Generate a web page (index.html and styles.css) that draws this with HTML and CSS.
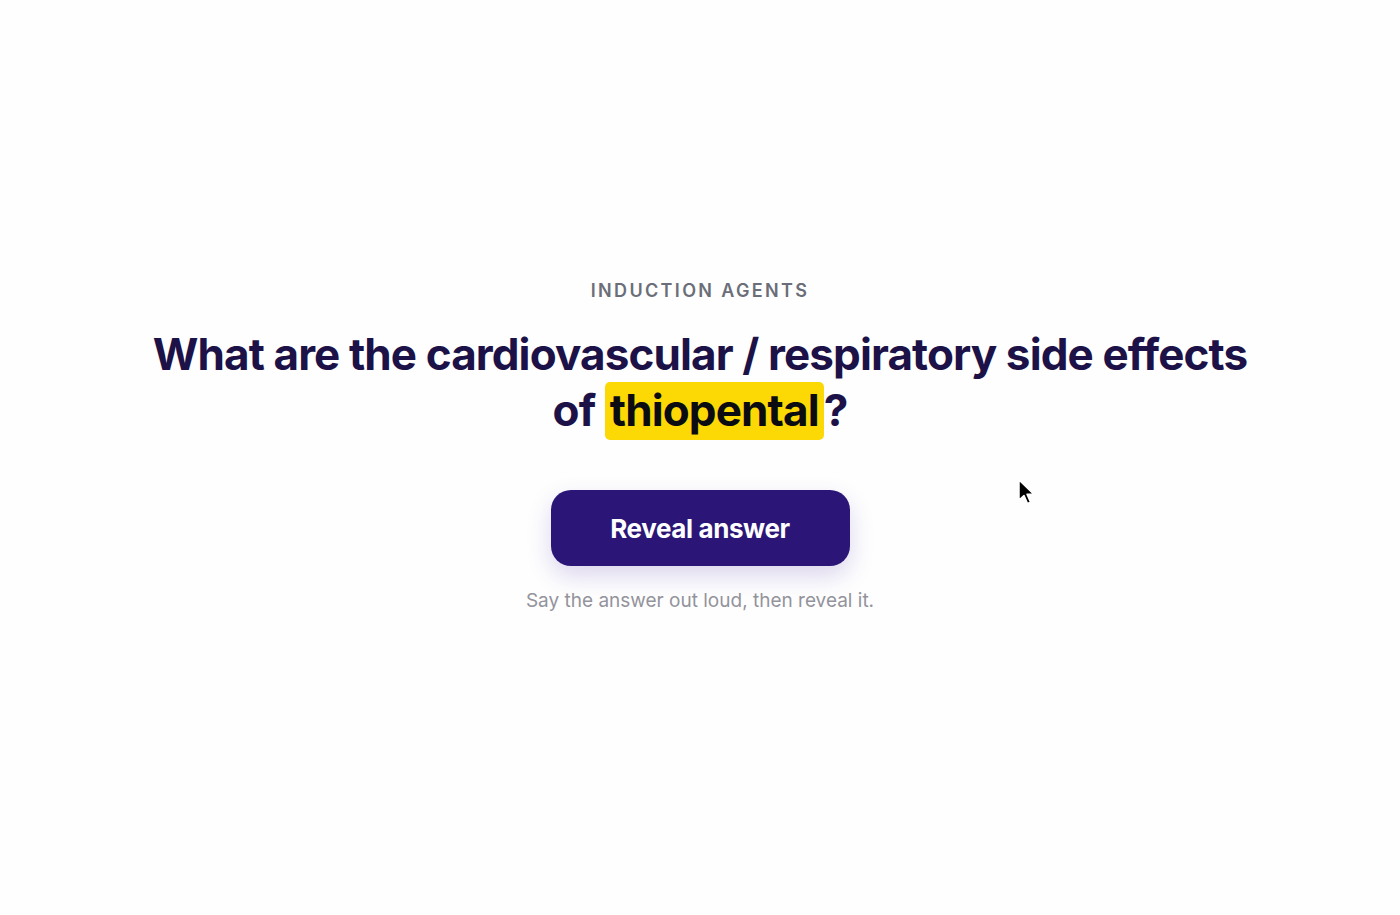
FILE: index.html
```html
<!DOCTYPE html>
<html>
<head>
<meta charset="utf-8">
<link rel="stylesheet" href="styles.css">
</head>
<body>
<main class="card">
  <div class="label">INDUCTION AGENTS</div>
  <h1 class="question">What are the cardiovascular / respiratory side effects of <span class="hl">thiopental</span>?</h1>
  <button class="reveal">Reveal answer</button>
  <p class="hint">Say the answer out loud, then reveal it.</p>
</main>
<svg class="cursor" width="20" height="30" viewBox="0 0 20 30">
  <path d="M2 2 L2 22 L7 17.5 L10.5 25.5 L13.5 24.2 L10 16.3 L16.5 16 Z" fill="#000" stroke="#fff" stroke-width="1.5" stroke-linejoin="round"/>
</svg>
</body>
</html>
```
FILE: styles.css
```css
html, body {
  margin: 0;
  padding: 0;
  background: #fefefe;
  font-family: Inter, "Liberation Sans", sans-serif;
}
body {
  width: 1400px;
  height: 915px;
  position: relative;
  overflow: hidden;
}
.card {
  display: flex;
  flex-direction: column;
  align-items: center;
  padding-top: 279px;
}
.label {
  font-size: 18px;
  font-weight: 600;
  letter-spacing: 0.13em;
  color: #6b6e78;
  line-height: 24px;
}
.question {
  margin: 23px 0 0;
  width: 1120px;
  text-align: center;
  font-size: 44px;
  font-weight: 700;
  line-height: 56px;
  letter-spacing: -0.02em;
  color: #1c1248;
}
.hl {
  background: #fcd804;
  color: #0b0b12;
  border-radius: 5px;
  padding: 1px 5px 3px;
}
.reveal {
  margin-top: 52px;
  width: 299px;
  height: 76px;
  border: none;
  border-radius: 20px;
  background: #2b1677;
  color: #fff;
  font-family: Inter, "Liberation Sans", sans-serif;
  font-size: 26px;
  font-weight: 700;
  letter-spacing: -0.015em;
  box-shadow: 0 10px 24px rgba(60, 30, 160, 0.18);
}
.hint {
  margin: 23px 0 0;
  font-size: 19px;
  line-height: 24px;
  color: #93939c;
}
.cursor {
  position: absolute;
  left: 1017px;
  top: 478px;
}
```
